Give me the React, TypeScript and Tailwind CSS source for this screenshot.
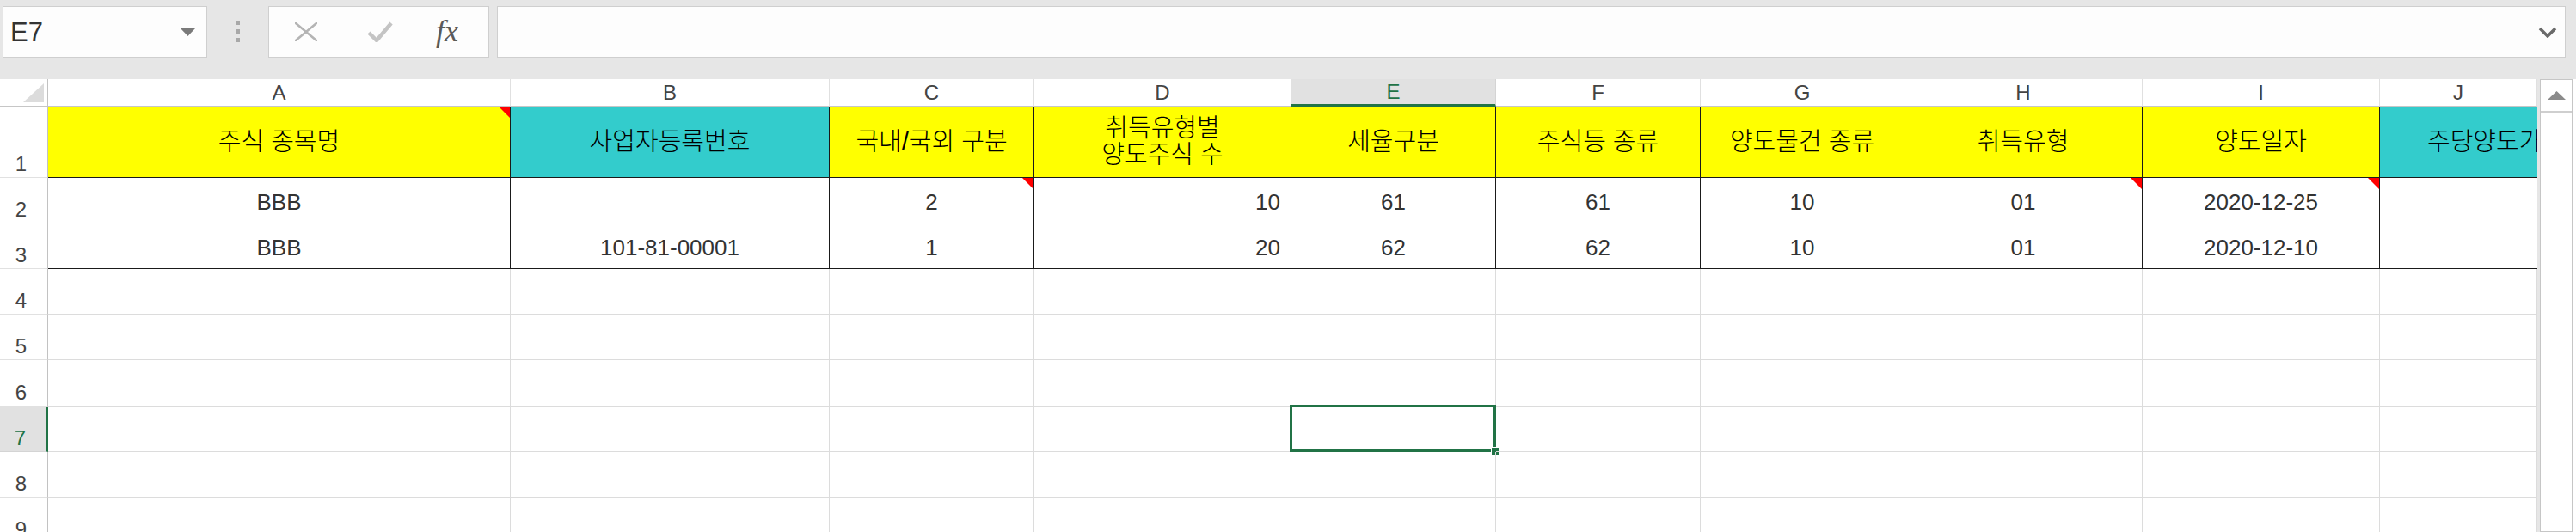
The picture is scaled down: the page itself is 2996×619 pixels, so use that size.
import React from 'react';

const GRID =
  'grid grid-cols-[56px_538px_371px_238px_299px_238px_238px_237px_277px_276px_minmax(0,1fr)]';
const SANS = "font-['Liberation_Sans','Noto_Sans_CJK_KR',sans-serif]";

const LETTERS = ['A', 'B', 'C', 'D', 'E', 'F', 'G', 'H', 'I', 'J'];

const YELLOW = 'bg-[#ffff00]';
const TEAL = 'bg-[#33cccc]';

const HEAD: { text: string; bg: string; note?: boolean }[] = [
  { text: '주식 종목명', bg: YELLOW, note: true },
  { text: '사업자등록번호', bg: TEAL },
  { text: '국내/국외 구분', bg: YELLOW },
  { text: '취득유형별\n양도주식 수', bg: YELLOW },
  { text: '세율구분', bg: YELLOW },
  { text: '주식등 종류', bg: YELLOW },
  { text: '양도물건 종류', bg: YELLOW },
  { text: '취득유형', bg: YELLOW },
  { text: '양도일자', bg: YELLOW },
];

const DATA = [
  { cells: ['BBB', '', '2', '10', '61', '61', '10', '01', '2020-12-25', ''], notes: [2, 7, 8] },
  { cells: ['BBB', '101-81-00001', '1', '20', '62', '62', '10', '01', '2020-12-10', ''], notes: [] as number[] },
];

// rows 4..9
const EMPTY_ROWS = [
  { n: 4, h: 'h-[53px]' },
  { n: 5, h: 'h-[53px]' },
  { n: 6, h: 'h-[54px]' },
  { n: 7, h: 'h-[53px]' },
  { n: 8, h: 'h-[53px]' },
  { n: 9, h: 'h-[53px]' },
];

function Note() {
  return (
    <span className="absolute top-0 right-0 w-0 h-0 border-l-[13px] border-t-[13px] border-l-transparent border-t-[#ff0000]" />
  );
}

function RowHead({ n }: { n: number }) {
  return (
    <div
      className={
        n === 7
          ? 'flex items-end justify-center pb-[3px] pr-[6px] text-[24px] leading-none bg-[#e1e1e1] text-[#217346] border-b border-b-[#d4d4d4] border-r-[3px] border-r-[#217346]'
          : 'flex items-end justify-center pb-[3px] pr-[6px] text-[24px] leading-none bg-white text-[#444] border-b border-b-[#e1e1e1] border-r border-r-[#c2c2c2]'
      }
    >
      {n}
    </div>
  );
}

function Toolbar() {
  return (
    <div className="h-[92px] bg-[#e6e6e6] flex items-start pt-[7px] pl-[3px] pr-[12px]">
      <div className="w-[238px] h-[60px] bg-[#fdfdfd] border border-[#cfcfcf] flex items-center justify-between pl-[8px] pr-[13px]">
        <span className="text-[31px] text-[#333] leading-none">E7</span>
        <svg width="17" height="9" viewBox="0 0 17 9">
          <polygon points="0,0 17,0 8.5,9" fill="#7a7a7a" />
        </svg>
      </div>
      <div className="w-[71px] h-[60px] flex flex-col items-center pt-[17px] gap-[5px]">
        <span className="w-[5px] h-[5px] bg-[#a8a8a8]" />
        <span className="w-[5px] h-[5px] bg-[#a8a8a8]" />
        <span className="w-[5px] h-[5px] bg-[#a8a8a8]" />
      </div>
      <div className="w-[257px] h-[60px] bg-[#fdfdfd] border border-[#cfcfcf] flex items-center pl-[30px]">
        <svg width="26" height="22" viewBox="0 0 26 22">
          <path d="M1 1 L25 21 M25 1 L1 21" stroke="#b4b4b4" strokeWidth="2.6" strokeLinecap="round" />
        </svg>
        <svg className="ml-[58px]" width="30" height="24" viewBox="0 0 30 24">
          <path d="M2 13 L11 22 L28 2" fill="none" stroke="#c4c4c4" strokeWidth="4.5" strokeLinejoin="round" />
        </svg>
        <span className="ml-[50px] font-['Liberation_Serif',serif] italic text-[36px] leading-none text-[#5a5a5a] pb-[2px]">
          fx
        </span>
      </div>
      <div className="ml-[9px] flex-1 h-[60px] bg-[#fdfdfd] border border-[#cfcfcf] flex items-center justify-end pr-[9px]">
        <svg width="22" height="13" viewBox="0 0 22 13">
          <path d="M2 2 L11 11 L20 2" fill="none" stroke="#6a6a6a" strokeWidth="3.5" />
        </svg>
      </div>
    </div>
  );
}

function Sheet() {
  return (
    <div className={GRID}>
      {/* column header row */}
      <div className="h-[32px] flex items-end justify-end pr-[4px] pb-[4px] bg-white border-r border-r-[#c2c2c2] border-b border-b-[#c6c6c6]">
        <svg width="24" height="22" viewBox="0 0 24 22">
          <polygon points="24,0 24,22 0,22" fill="#dcdcdc" />
        </svg>
      </div>
      {LETTERS.map((l) =>
        l === 'E' ? (
          <div
            key={l}
            className="h-[32px] flex items-center justify-center text-[24px] leading-none bg-[#e1e1e1] text-[#217346] border-r border-r-[#d4d4d4] border-b-[3px] border-b-[#217346]"
          >
            {l}
          </div>
        ) : (
          <div
            key={l}
            className="h-[32px] flex items-center justify-center text-[24px] leading-none bg-white text-[#444] border-r border-r-[#e0e0e0] border-b border-b-[#c6c6c6]"
          >
            {l}
          </div>
        ),
      )}

      {/* row 1 */}
      <RowHead n={1} />
      {HEAD.map((h) => (
        <div
          key={h.text}
          className={`relative h-[83px] flex items-center justify-center text-center whitespace-pre-line text-[29px] leading-[31px] font-light text-black border-r border-b border-[#1a1a1a] ${h.bg}`}
        >
          {h.text}
          {h.note && <Note />}
        </div>
      ))}
      <div className="h-[83px] overflow-hidden flex items-center bg-[#33cccc] border-b border-b-[#1a1a1a]">
        <div className="w-[270px] shrink-0 text-center text-[29px] leading-[31px] font-light text-black whitespace-nowrap">
          주당양도가액
        </div>
      </div>

      {/* rows 2-3 */}
      {DATA.map((row, ri) => (
        <React.Fragment key={ri}>
          <RowHead n={ri + 2} />
          {row.cells.map((c, ci) => (
            <div
              key={ci}
              className={
                ci === 3
                  ? 'relative h-[53px] flex items-center justify-end pr-[12px] pt-[4px] text-[26px] text-[#333] border-r border-b border-[#1a1a1a]'
                  : ci === 9
                    ? 'relative h-[53px] border-b border-b-[#1a1a1a]'
                    : 'relative h-[53px] flex items-center justify-center pt-[4px] text-[26px] text-[#333] border-r border-b border-[#1a1a1a]'
              }
            >
              {c}
              {row.notes.includes(ci) && <Note />}
            </div>
          ))}
        </React.Fragment>
      ))}

      {/* empty rows */}
      {EMPTY_ROWS.map((r) => (
        <React.Fragment key={r.n}>
          <div className={`${r.h} flex`}>
            <div className="flex-1 flex">
              <RowHeadFill n={r.n} />
            </div>
          </div>
          {LETTERS.map((l) => (
            <div key={l} className={`relative ${r.h} border-r border-b border-[#dcdcdc]`}>
              {r.n === 7 && l === 'E' && (
                <>
                  <span className="absolute -left-[2px] -top-[2px] -right-[1px] -bottom-[1px] border-[3px] border-[#217346]" />
                  <span className="absolute -right-[5px] -bottom-[5px] w-[10px] h-[10px] bg-[#217346] border border-white" />
                </>
              )}
            </div>
          ))}
        </React.Fragment>
      ))}
    </div>
  );
}

function RowHeadFill({ n }: { n: number }) {
  return (
    <div
      className={
        n === 7
          ? 'flex-1 flex items-end justify-center pb-[3px] pr-[6px] text-[24px] leading-none bg-[#e1e1e1] text-[#217346] border-b border-b-[#d4d4d4] border-r-[3px] border-r-[#217346]'
          : 'flex-1 flex items-end justify-center pb-[3px] pr-[6px] text-[24px] leading-none bg-white text-[#444] border-b border-b-[#e1e1e1] border-r border-r-[#c2c2c2]'
      }
    >
      {n}
    </div>
  );
}

function ScrollBar() {
  return (
    <div className="w-[45px] flex bg-white">
      <div className="w-[3px] bg-[#e6e6e6]" />
      <div className="w-[38px] flex flex-col bg-white border border-[#c6c6c6]">
        <div className="h-[38px] flex items-center justify-center border-b-2 border-[#cfcfcf]">
          <svg width="21" height="10" viewBox="0 0 21 10">
            <polygon points="10.5,0 21,10 0,10" fill="#8b8b8b" />
          </svg>
        </div>
        <div className="flex-1" />
      </div>
    </div>
  );
}

export default function App() {
  return (
    <div className={`w-[2996px] h-[619px] overflow-hidden bg-white ${SANS}`}>
      <Toolbar />
      <div className="flex h-[527px] overflow-hidden">
        <div className="flex-1 min-w-0">
          <Sheet />
        </div>
        <ScrollBar />
      </div>
    </div>
  );
}
